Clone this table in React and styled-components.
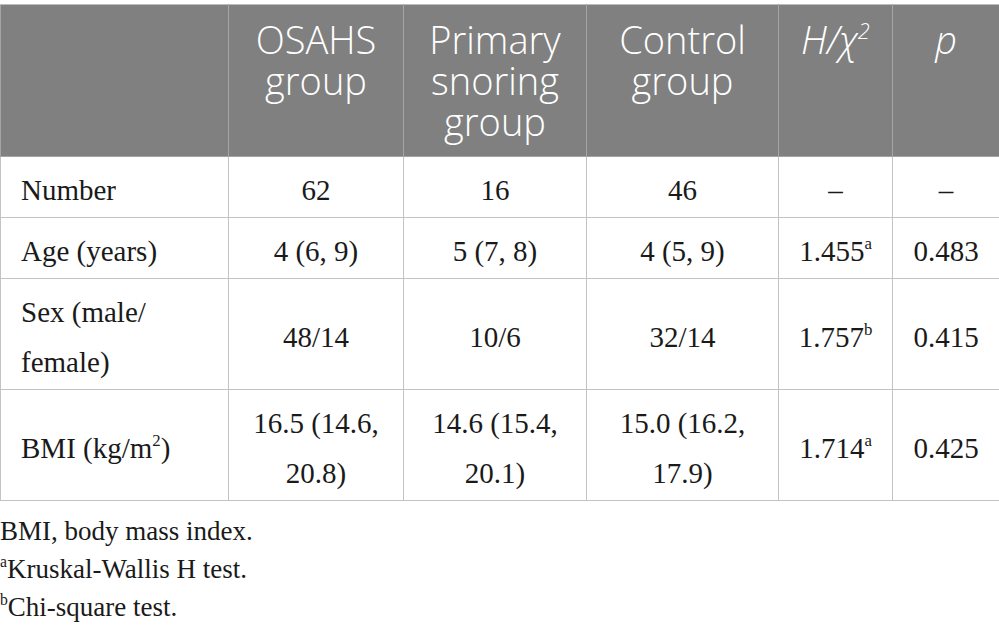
import React from "react";
import styled, { createGlobalStyle } from "styled-components";

const Global = createGlobalStyle`
  html, body { margin: 0; padding: 0; background: #ffffff; }
  body { width: 999px; overflow: hidden; }
`;

const Page = styled.div`
  padding-top: 4px;
  width: 999px;
`;

const Table = styled.table`
  border-collapse: collapse;
  table-layout: fixed;
  width: 999px;
  font-family: "Liberation Serif", "Times New Roman", serif;
  color: #1a1a1a;
`;

const HeadCell = styled.th`
  background: #7f807f;
  color: #ffffff;
  font-family: "Open Sans", "Noto Sans", sans-serif;
  font-weight: 300;
  font-size: 38px;
  line-height: 41px;
  text-align: center;
  vertical-align: top;
  padding: 14px 8px 14px;
  border: 1px solid #a3a4a3;
  border-top-color: #bdbdbd;
`;

const Cell = styled.td`
  font-size: 29px;
  line-height: 50px;
  padding: 8px ${(p) => (p.$label ? "20px" : "6px")} 2px;
  text-align: ${(p) => (p.$label ? "left" : "center")};
  vertical-align: middle;
  border: 1px solid #c3c3c3;
`;

const Sup = styled.sup`
  font-size: 0.58em;
  line-height: 0;
  vertical-align: baseline;
  position: relative;
  top: -0.7em;
`;

const Notes = styled.div`
  margin-top: 11px;
  font-family: "Liberation Serif", "Times New Roman", serif;
  font-size: 27px;
  line-height: 38px;
  color: #1a1a1a;
`;

const Note = styled.div``;

const cols = [228, 175, 183, 192, 114, 107];

const rows = [
  { label: "Number", vals: ["62", "16", "46", "–", "–"] },
  { label: "Age (years)", vals: ["4 (6, 9)", "5 (7, 8)", "4 (5, 9)", ["1.455", "a"], "0.483"] },
  { label: "Sex (male/ female)", vals: ["48/14", "10/6", "32/14", ["1.757", "b"], "0.415"] },
  {
    label: (
      <>
        BMI (kg/m<Sup>2</Sup>)
      </>
    ),
    vals: ["16.5 (14.6, 20.8)", "14.6 (15.4, 20.1)", "15.0 (16.2, 17.9)", ["1.714", "a"], "0.425"],
  },
];

export default function App() {
  return (
    <Page>
      <Global />
      <Table>
        <colgroup>
          {cols.map((w, i) => (
            <col key={i} style={{ width: w }} />
          ))}
        </colgroup>
        <thead>
          <tr>
            <HeadCell />
            <HeadCell>OSAHS group</HeadCell>
            <HeadCell>Primary snoring group</HeadCell>
            <HeadCell>Control group</HeadCell>
            <HeadCell>
              <i>
                H/χ<Sup>2</Sup>
              </i>
            </HeadCell>
            <HeadCell>
              <i>p</i>
            </HeadCell>
          </tr>
        </thead>
        <tbody>
          {rows.map((r, i) => (
            <tr key={i}>
              <Cell $label>{r.label}</Cell>
              {r.vals.map((v, j) => (
                <Cell key={j}>
                  {Array.isArray(v) ? (
                    <>
                      {v[0]}
                      <Sup>{v[1]}</Sup>
                    </>
                  ) : (
                    v
                  )}
                </Cell>
              ))}
            </tr>
          ))}
        </tbody>
      </Table>
      <Notes>
        <Note>BMI, body mass index.</Note>
        <Note>
          <Sup>a</Sup>Kruskal-Wallis H test.
        </Note>
        <Note>
          <Sup>b</Sup>Chi-square test.
        </Note>
      </Notes>
    </Page>
  );
}
